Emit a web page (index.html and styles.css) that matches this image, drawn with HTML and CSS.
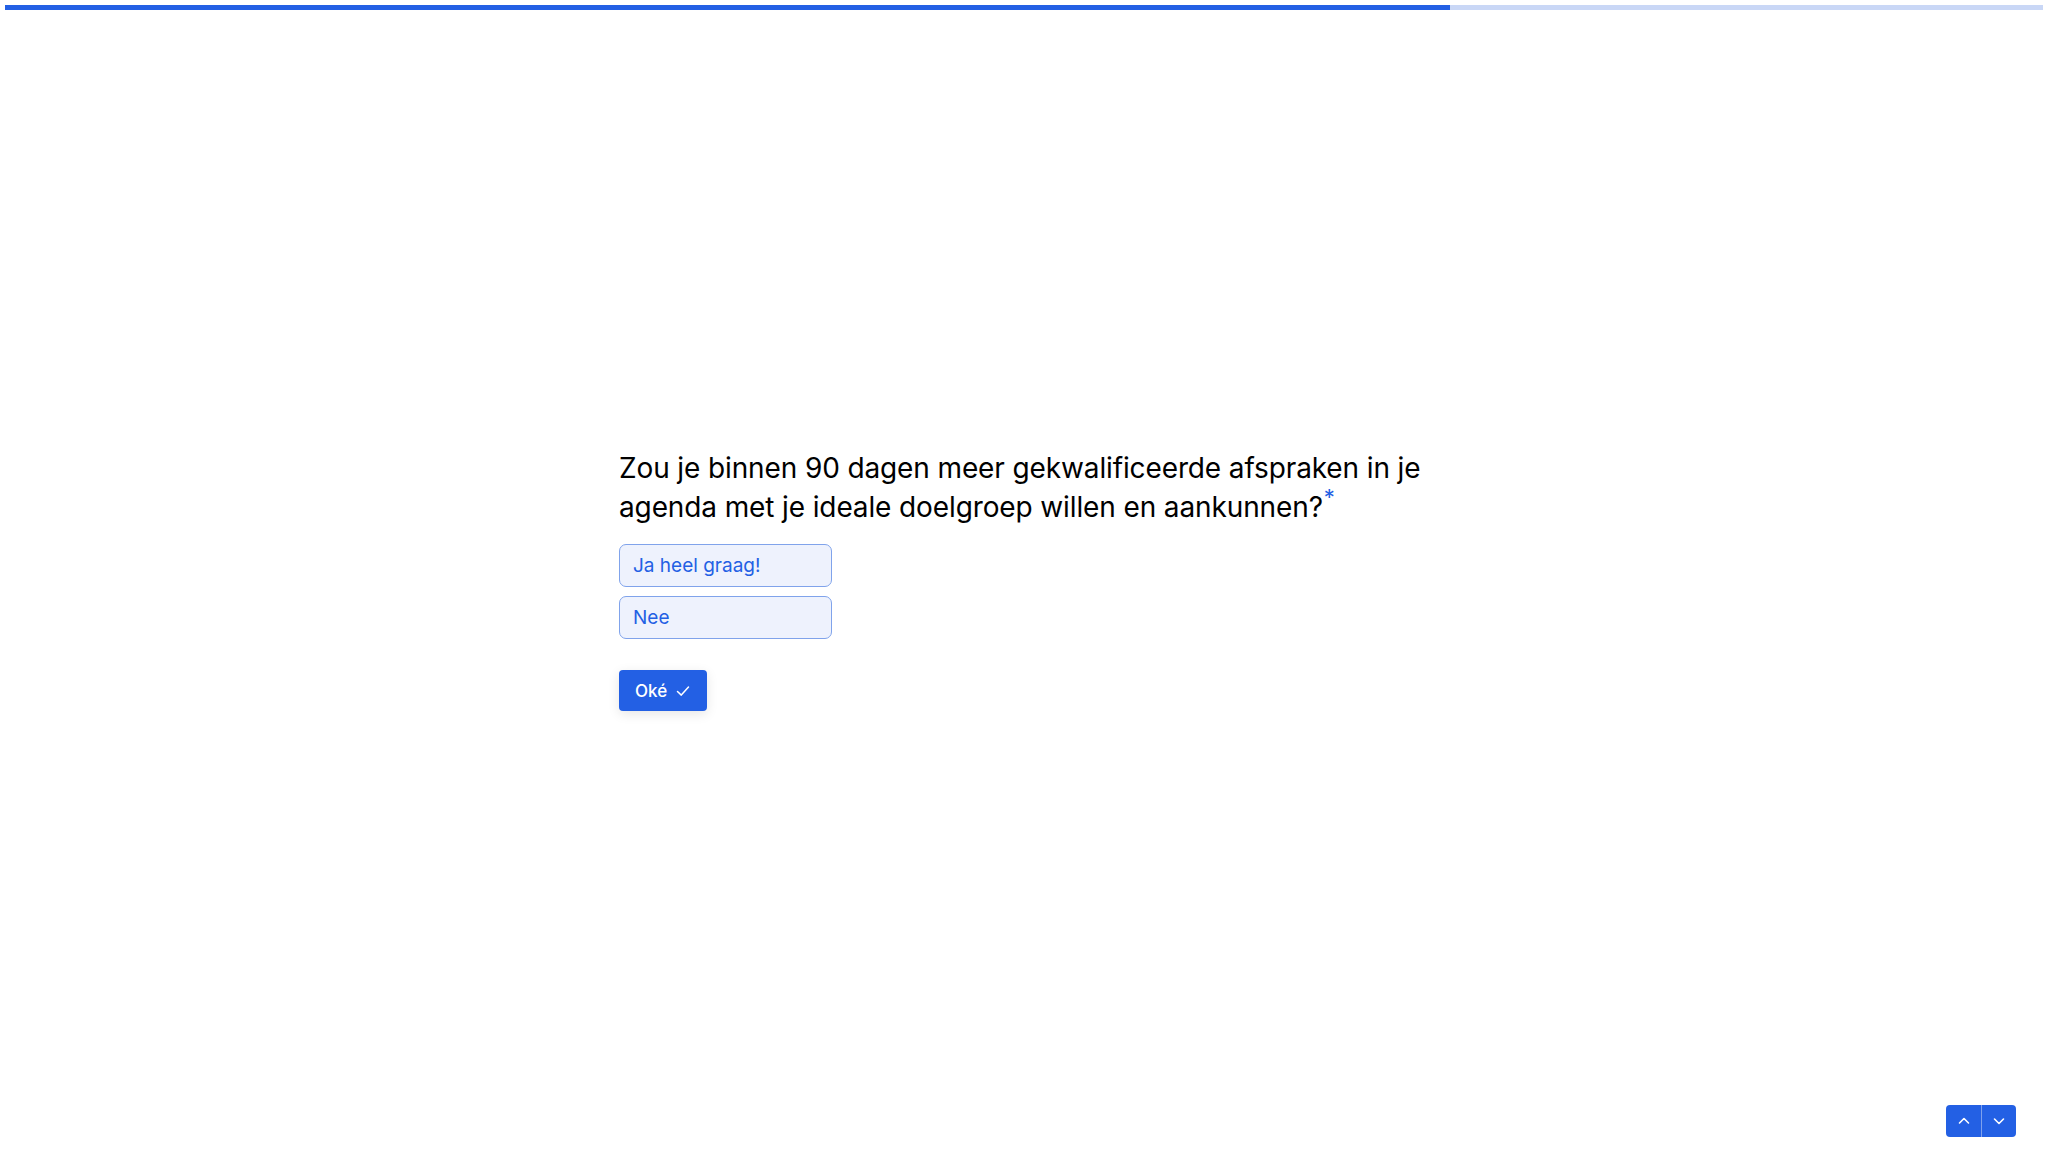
FILE: index.html
```html
<!DOCTYPE html>
<html lang="nl">
<head>
<meta charset="utf-8">
<title>Vraag</title>
<link rel="stylesheet" href="styles.css">
</head>
<body>
  <div class="progress"><div class="progress-fill" style="width: 70.9%"></div></div>

  <main class="stage">
    <section class="question">
      <h1 class="question-title">Zou je binnen 90 dagen meer gekwalificeerde afspraken in je agenda met je ideale doelgroep willen en aankunnen?<sup class="required">*</sup></h1>
      <div class="choices">
        <button class="choice">Ja heel graag!</button>
        <button class="choice">Nee</button>
      </div>
      <button class="ok">Oké
        <svg class="ok-check" viewBox="0 0 16 16" width="16" height="16" aria-hidden="true"><path d="M2.5 8.5l3.8 3.6L13.5 4" fill="none" stroke="currentColor" stroke-width="1.5" stroke-linecap="round" stroke-linejoin="round"/></svg>
      </button>
    </section>
  </main>

  <nav class="pager">
    <button class="pager-btn" aria-label="Vorige">
      <svg viewBox="0 0 14 14" width="14" height="14"><path d="M2.5 9L7 4.5 11.5 9" fill="none" stroke="currentColor" stroke-width="1.6" stroke-linecap="round" stroke-linejoin="round"/></svg>
    </button>
    <button class="pager-btn" aria-label="Volgende">
      <svg viewBox="0 0 14 14" width="14" height="14"><path d="M2.5 5L7 9.5 11.5 5" fill="none" stroke="currentColor" stroke-width="1.6" stroke-linecap="round" stroke-linejoin="round"/></svg>
    </button>
  </nav>
</body>
</html>
```

FILE: styles.css
```css
* { box-sizing: border-box; }

html, body {
  margin: 0;
  height: 100%;
  background: #ffffff;
  font-family: Inter, "Noto Sans", sans-serif;
  color: #000000;
}

.progress {
  position: fixed;
  top: 5px;
  left: 5px;
  right: 5px;
  height: 5px;
  background: #c9d7f6;
}

.progress-fill {
  height: 100%;
  background: #2360e4;
}

.stage {
  height: 100%;
  display: flex;
  align-items: center;
  justify-content: center;
}

.question {
  width: 810px;
  margin-top: 8px;
}

.question-title {
  margin: 0 0 17px;
  font-size: 28px;
  line-height: 39px;
  font-weight: 400;
  letter-spacing: -0.12px;
}

.required {
  color: #2360e4;
  font-size: 22px;
  line-height: 0;
  margin-left: 1px;
  vertical-align: 12px;
}

.choices {
  display: flex;
  flex-direction: column;
  align-items: flex-start;
  gap: 9px;
}

.choice {
  width: 213px;
  height: 43px;
  padding: 0 13px;
  text-align: left;
  font-family: inherit;
  font-size: 19px;
  color: #2360e4;
  background: #eef2fd;
  border: 1px solid #80a3eb;
  border-radius: 7px;
}

.ok {
  margin-top: 31px;
  display: inline-flex;
  align-items: center;
  gap: 8px;
  height: 41px;
  padding: 0 16px 0 16px;
  font-family: inherit;
  font-size: 17px;
  font-weight: 500;
  color: #ffffff;
  background: #2360e4;
  border: none;
  border-radius: 4px;
  box-shadow: 0 3px 12px rgba(0, 0, 0, 0.10);
}

.ok-check { display: block; }

.pager {
  position: fixed;
  right: 32px;
  bottom: 15px;
  display: flex;
  border-radius: 4px;
  overflow: hidden;
}

.pager-btn {
  width: 35px;
  height: 32px;
  padding: 0;
  display: flex;
  align-items: center;
  justify-content: center;
  color: #ffffff;
  background: #2360e4;
  border: none;
}

.pager-btn + .pager-btn {
  border-left: 1px solid #7fa1ec;
}
```
